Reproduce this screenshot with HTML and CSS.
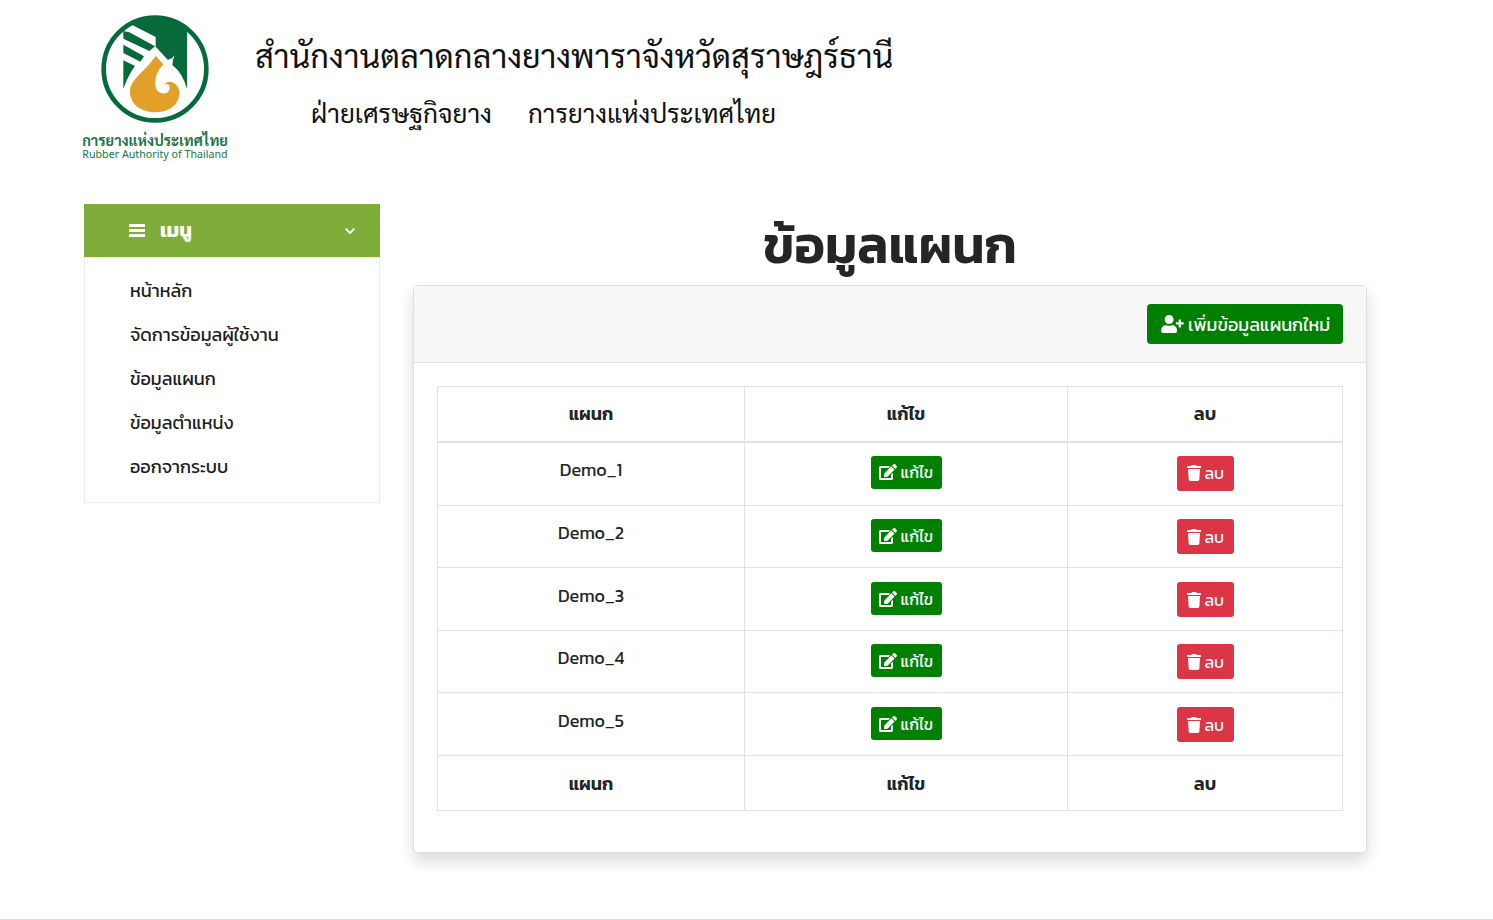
FILE: index.html
```html
<!DOCTYPE html>
<html lang="th">
<head>
<meta charset="utf-8">
<title>ข้อมูลแผนก</title>
<link rel="stylesheet" href="styles.css">
</head>
<body>
<svg class="sprite" aria-hidden="true">
  <symbol id="edit" viewBox="0 0 576 512"><path fill="currentColor" d="M402.600 83.200l90.200 90.200c3.800 3.800 3.800 10 0 13.800L274.400 405.600l-92.800 10.300c-12.400 1.400-22.900-9.100-21.500-21.500l10.300-92.800L388.800 83.200c3.800-3.800 10-3.800 13.800 0zm162-22.900l-48.800-48.800c-15.200-15.200-39.900-15.200-55.200 0l-35.400 35.400c-3.800 3.800-3.800 10 0 13.800l90.200 90.200c3.800 3.800 10 3.800 13.800 0l35.400-35.400c15.200-15.300 15.200-40 0-55.200zM384 346.200V448H64V128h229.800c3.200 0 6.200-1.300 8.500-3.500l40-40c7.600-7.600 2.200-20.500-8.500-20.500H48C21.500 64 0 85.500 0 112v352c0 26.500 21.500 48 48 48h352c26.500 0 48-21.500 48-48V306.200c0-10.700-12.900-16-20.500-8.500l-40 40c-2.200 2.300-3.500 5.300-3.500 8.500z"/></symbol>
  <symbol id="trash" viewBox="0 0 448 512"><path fill="currentColor" d="M432 32H312l-9.400-18.700A24 24 0 0 0 281.100 0H166.800a23.700 23.700 0 0 0-21.400 13.300L136 32H16A16 16 0 0 0 0 48v32a16 16 0 0 0 16 16h416a16 16 0 0 0 16-16V48a16 16 0 0 0-16-16zM32 128L53 467a48 48 0 0 0 48 45h246a48 48 0 0 0 48-45L416 128z"/></symbol>
</svg>
<header class="banner">
  <div class="logo">
    <svg class="emblem" viewBox="93 44 324 324">
      <circle cx="255" cy="206" r="154" fill="#fff" stroke="#076a3a" stroke-width="14"/>
      <g fill="#076a3a">
        <path d="M188 75L180 66A157 157 0 0 1 351 85V266Q338 218 307 194Q307 180 314 165Q307 176 294 179L257 139V110Z"/>
        <path d="M160 92L178 96L255 138L238 152L160 115Z"/>
        <path d="M160 133L222 168L211 184L160 158Z"/>
        <path d="M160 180L195 197Q174 225 160 266Z"/>
      </g>
      <path fill="#e3a029" d="M257 166L281 193C262 207 253 235 257 260C263 285 299 286 299 262C299 252 291 248 285 254C285 242 307 240 317 252C326 260 330 272 328 285C323 320 290 336 255 336C210 334 180 312 180 272C182 235 220 220 257 166Z"/>
    </svg>
    <span class="logo-th">การยางแห่งประเทศไทย</span>
    <span class="logo-en">Rubber Authority of Thailand</span>
  </div>
  <div class="titles">
    <div class="title">สำนักงานตลาดกลางยางพาราจังหวัดสุราษฎร์ธานี</div>
    <div class="subtitle"><span>ฝ่ายเศรษฐกิจยาง</span><span class="org">การยางแห่งประเทศไทย</span></div>
  </div>
</header>
<div class="layout">
  <nav class="menu">
    <div class="menu-head">
      <svg class="bars" viewBox="0 0 16 14"><path d="M0 1.500h16M0 6.500h16M0 11.500h16" stroke="#fff" stroke-width="3"/></svg>
      <span class="menu-title">เมนู</span>
      <svg class="chev" viewBox="0 0 10 6"><path d="M.7.700L5 5L9.300.700" fill="none" stroke="#fff" stroke-width="1.900"/></svg>
    </div>
    <ul class="menu-list">
      <li>หน้าหลัก</li>
      <li>จัดการข้อมูลผู้ใช้งาน</li>
      <li>ข้อมูลแผนก</li>
      <li>ข้อมูลตำแหน่ง</li>
      <li>ออกจากระบบ</li>
    </ul>
  </nav>
  <main class="content">
    <h1 class="heading">ข้อมูลแผนก</h1>
    <section class="card">
      <div class="card-head">
        <a class="add">
          <svg class="plus" viewBox="0 0 640 512"><path fill="currentColor" d="M624 208h-64v-64c0-8.800-7.200-16-16-16h-32c-8.800 0-16 7.200-16 16v64h-64c-8.800 0-16 7.200-16 16v32c0 8.800 7.200 16 16 16h64v64c0 8.800 7.200 16 16 16h32c8.800 0 16-7.200 16-16v-64h64c8.800 0 16-7.200 16-16v-32c0-8.800-7.200-16-16-16zm-400 48c70.700 0 128-57.300 128-128S294.700 0 224 0 96 57.300 96 128s57.300 128 128 128zm89.600 32h-16.700c-22.200 10.200-46.900 16-72.900 16s-50.600-5.800-72.900-16h-16.700C60.200 288 0 348.200 0 422.400V464c0 26.500 21.500 48 48 48h352c26.500 0 48-21.500 48-48v-41.600c0-74.200-60.200-134.400-134.400-134.400z"/></svg>
          <span>เพิ่มข้อมูลแผนกใหม่</span>
        </a>
      </div>
      <div class="card-body">
        <table class="grid">
          <colgroup><col class="c1"><col class="c2"><col class="c3"></colgroup>
          <thead><tr><th>แผนก</th><th>แก้ไข</th><th>ลบ</th></tr></thead>
          <tbody>
            <tr class="first"><td>Demo_1</td><td><a class="btn edit"><svg><use href="#edit"/></svg><span>แก้ไข</span></a></td><td><a class="btn del"><svg><use href="#trash"/></svg><span>ลบ</span></a></td></tr>
            <tr><td>Demo_2</td><td><a class="btn edit"><svg><use href="#edit"/></svg><span>แก้ไข</span></a></td><td><a class="btn del"><svg><use href="#trash"/></svg><span>ลบ</span></a></td></tr>
            <tr class="tall"><td>Demo_3</td><td><a class="btn edit"><svg><use href="#edit"/></svg><span>แก้ไข</span></a></td><td><a class="btn del"><svg><use href="#trash"/></svg><span>ลบ</span></a></td></tr>
            <tr><td>Demo_4</td><td><a class="btn edit"><svg><use href="#edit"/></svg><span>แก้ไข</span></a></td><td><a class="btn del"><svg><use href="#trash"/></svg><span>ลบ</span></a></td></tr>
            <tr class="tall"><td>Demo_5</td><td><a class="btn edit"><svg><use href="#edit"/></svg><span>แก้ไข</span></a></td><td><a class="btn del"><svg><use href="#trash"/></svg><span>ลบ</span></a></td></tr>
          </tbody>
          <tfoot><tr><th>แผนก</th><th>แก้ไข</th><th>ลบ</th></tr></tfoot>
        </table>
      </div>
    </section>
  </main>
</div>
<footer class="foot"></footer>
</body>
</html>
```
FILE: styles.css
```css
* { box-sizing: border-box; }
html, body { height: 920px; overflow: hidden; }
body {
  margin: 0; background: #fff; color: #212529;
  font: 18px/24px "Kanit", "Prompt", "Noto Sans", "Noto Sans Thai", sans-serif;
  display: flex; flex-direction: column;
}
.sprite { display: none; }
svg { display: block; flex: none; }
span { white-space: nowrap; }
.banner { display: flex; height: 204px; padding: 15px 0 0 82px; font-family: "Sarabun", "TH Sarabun New", "Noto Sans Thai Looped", "Noto Looped Thai", "Loma", "Garuda", "Noto Sans", sans-serif; }
.logo { width: 146px; display: flex; flex-direction: column; align-items: center; color: #1c7448; }
.emblem { width: 108px; height: 108px; }
.logo-th { font-size: 14.600px; line-height: 17px; font-weight: 700; margin-top: 8px; }
.logo-en { font-family: "Noto Sans", sans-serif; font-size: 10.700px; line-height: 11px; margin-top: 1px; }
.titles { padding-left: 27px; color: #111; }
.title { font-size: 32.500px; line-height: 48px; margin-top: 16px; white-space: nowrap; }
.subtitle { display: flex; gap: 36px; padding-left: 56px; font-size: 26.100px; line-height: 40px; margin-top: 13px; }
.org { font-size: 25.900px; }
.layout { display: flex; padding-left: 84px; flex: 1; }
.menu { width: 296px; }
.menu-head { height: 53px; background: #7fad39; color: #fff; display: flex; align-items: center; padding: 0 25px 0 45px; }
.bars { width: 16px; height: 14px; }
.menu-title { font-size: 20px; line-height: 24px; font-weight: 700; margin-left: 15px; flex: 1; padding-bottom: 1px; }
.chev { width: 10px; height: 6px; }
.menu-list { list-style: none; margin: 0; padding: 11px 0 13px 45px; border: 1px solid #ebebeb; height: 246px; }
.menu-list li { height: 44px; line-height: 44px; color: #1c1c1c; }
.content { width: 954px; margin-left: 33px; }
.heading { margin: 0; height: 81px; line-height: 81px; font-size: 51.800px; font-weight: 600; text-align: center; color: #252525; }
.card { height: 568px; border: 1px solid #dfdfdf; border-radius: 4px; box-shadow: 0 8px 16px rgba(0,0,0,.15); background: #fff; }
.card-head { height: 77px; background: #f7f7f7; border-bottom: 1px solid #dfdfdf; padding: 18px 23px; display: flex; justify-content: flex-end; }
.add { width: 196px; height: 40px; background: green; color: #fff; border-radius: 4px; display: flex; align-items: center; padding-left: 14px; gap: 4px; }
.add span { padding-top: 2px; }
.plus { width: 23px; height: 18px; }
.card-body { padding: 23px; }
.grid { width: 906px; table-layout: fixed; border-collapse: collapse; text-align: center; }
.c1 { width: 307px; } .c2 { width: 323px; } .c3 { width: 275px; }
.grid th, .grid td { border: 1px solid #dee2e6; padding: 0; }
.grid th { height: 55px; font-weight: 600; padding-top: 1px; }
.grid thead th { border-bottom-width: 2px; }
.grid td { height: 62px; vertical-align: top; padding-top: 13px; }
.grid .first td { height: 64px; }
.grid .tall td { height: 63px; padding-top: 14px; }
.grid td:first-child, .grid .first td:first-child { padding-top: 15px; }
.grid .tall td:first-child { padding-top: 16px; }
.btn { display: inline-flex; color: #fff; border-radius: 3px; font-size: 16px; align-items: center; vertical-align: top; }
.edit { width: 71px; height: 33px; background: green; padding-left: 8px; gap: 4px; }
.edit svg { width: 18px; height: 16px; }
.del { width: 57px; height: 35px; background: #dc3545; padding-left: 10px; gap: 4px; }
.del svg { width: 14px; height: 16px; }
.foot { height: 1px; background: #dedede; }
```
